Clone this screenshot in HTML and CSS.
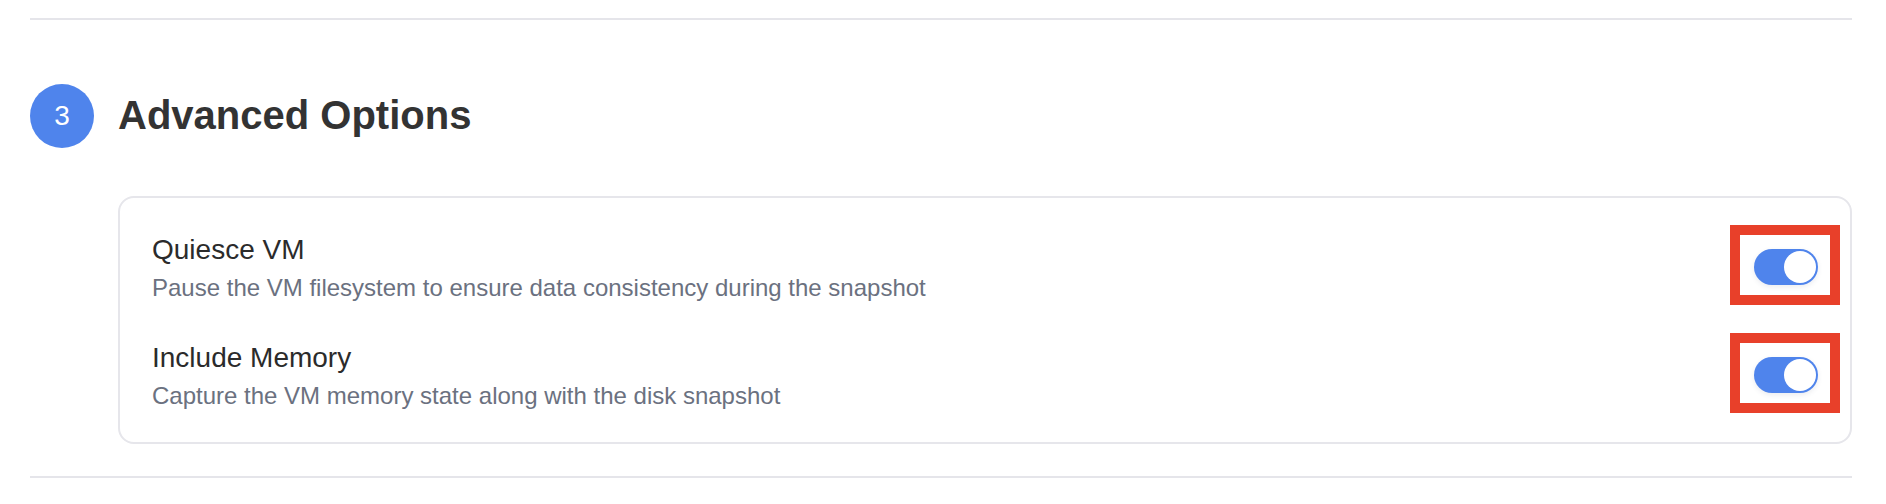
FILE: index.html
```html
<!DOCTYPE html>
<html lang="en">
<head>
<meta charset="utf-8">
<title>Advanced Options</title>
<link rel="stylesheet" href="styles.css">
</head>
<body>
<div class="page">
  <hr class="divider divider-top">
  <section class="section">
    <header class="section-head">
      <div class="step">3</div>
      <h2 class="section-title">Advanced Options</h2>
    </header>
    <div class="card">
      <div class="option">
        <div class="option-text">
          <div class="option-label">Quiesce VM</div>
          <div class="option-desc">Pause the VM filesystem to ensure data consistency during the snapshot</div>
        </div>
        <div class="toggle-wrap highlight">
          <span class="toggle on"><span class="knob"></span></span>
        </div>
      </div>
      <div class="option">
        <div class="option-text">
          <div class="option-label">Include Memory</div>
          <div class="option-desc">Capture the VM memory state along with the disk snapshot</div>
        </div>
        <div class="toggle-wrap highlight">
          <span class="toggle on"><span class="knob"></span></span>
        </div>
      </div>
    </div>
  </section>
  <hr class="divider divider-bottom">
</div>
</body>
</html>
```

FILE: styles.css
```css
* { box-sizing: border-box; }

html, body {
  margin: 0;
  padding: 0;
  background: #ffffff;
}

body {
  font-family: "Liberation Sans", Arial, Helvetica, sans-serif;
  color: #333333;
}

.page {
  padding: 0 34px 0 30px;
}

.divider {
  border: 0;
  height: 2px;
  background: #e5e5ea;
  margin: 0;
}

.divider-top {
  margin-top: 18px;
}

.divider-bottom {
  margin-top: 32px;
}

.section {
  padding-top: 64px;
}

.section-head {
  display: flex;
  align-items: center;
  gap: 24px;
  height: 64px;
  margin-bottom: 48px;
}

.step {
  width: 64px;
  height: 64px;
  border-radius: 50%;
  background: #4f84ec;
  color: #ffffff;
  font-size: 28px;
  display: flex;
  align-items: center;
  justify-content: center;
  flex: none;
}

.section-title {
  margin: 0;
  font-size: 40px;
  font-weight: 700;
  color: #333333;
  line-height: 48px;
  position: relative;
  top: -1px;
}

.card {
  margin-left: 88px;
  border: 2px solid #e6e6eb;
  border-radius: 16px;
  padding: 32px 32px 30px;
  display: flex;
  flex-direction: column;
  gap: 34px;
}

.option {
  display: flex;
  align-items: center;
  justify-content: space-between;
}

.option-text {
  display: flex;
  flex-direction: column;
}

.option-label {
  font-size: 28px;
  line-height: 40px;
  color: #2b2b2b;
}

.option-desc {
  font-size: 24px;
  line-height: 32px;
  margin-top: 2px;
  color: #6b7180;
}

.toggle-wrap {
  position: relative;
  display: flex;
}

.highlight::after {
  content: "";
  position: absolute;
  left: -24px;
  right: -22px;
  top: -24px;
  bottom: -20px;
  border: 10px solid #e8402a;
  pointer-events: none;
}

.toggle {
  position: relative;
  display: block;
  width: 64px;
  height: 36px;
  border-radius: 18px;
  background: #4f84ec;
  box-shadow: 0 2px 5px rgba(60, 70, 100, 0.10);
}

.knob {
  position: absolute;
  top: 2px;
  right: 2px;
  width: 32px;
  height: 32px;
  border-radius: 50%;
  background: #ffffff;
}
```
